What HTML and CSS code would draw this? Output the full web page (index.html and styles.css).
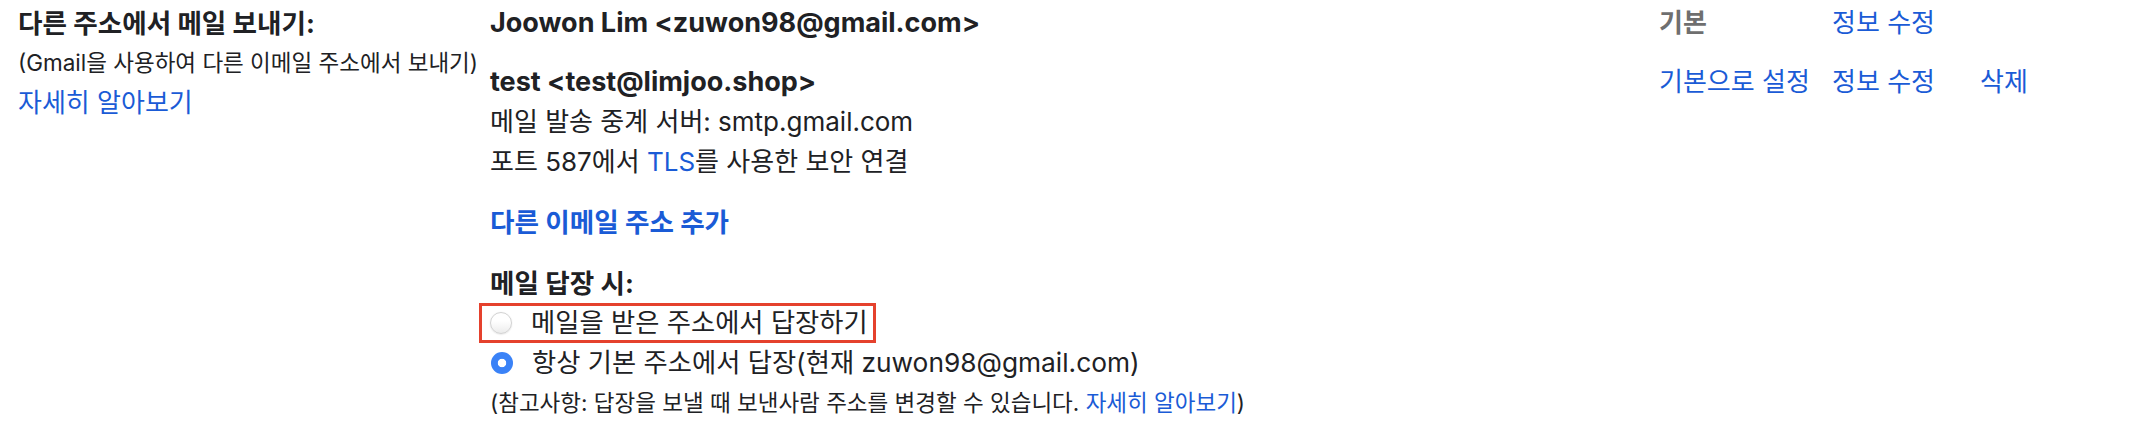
FILE: index.html
```html
<!DOCTYPE html>
<html lang="ko">
<head>
<meta charset="utf-8">
<link rel="stylesheet" href="styles.css">
</head>
<body>
<div class="page">
  <div class="label-col">
    <div class="heading">다른 주소에서 메일 보내기:</div>
    <div class="note">(Gmail을 사용하여 다른 이메일 주소에서 보내기)</div>
    <a class="link">자세히 알아보기</a>
  </div>
  <div class="main-col">
    <div class="addr-row first">
      <div class="addr">
        <div class="name">Joowon Lim &lt;zuwon98@gmail.com&gt;</div>
      </div>
      <div class="act default">기본</div>
      <div class="act"><a class="link">정보 수정</a></div>
      <div class="act"></div>
    </div>
    <div class="addr-row">
      <div class="addr">
        <div class="name">test &lt;test@limjoo.shop&gt;</div>
        <div class="line">메일 발송 중계 서버: smtp.gmail.com</div>
        <div class="line">포트 587에서 <a class="link">TLS</a>를 사용한 보안 연결</div>
      </div>
      <div class="act"><a class="link">기본으로 설정</a></div>
      <div class="act"><a class="link">정보 수정</a></div>
      <div class="act"><a class="link">삭제</a></div>
    </div>
    <div class="add-row"><a class="link strong">다른 이메일 주소 추가</a></div>
    <div class="reply">
      <div class="heading">메일 답장 시:</div>
      <div class="option-wrap">
        <label class="option highlighted"><span class="radio"></span><span>메일을 받은 주소에서 답장하기</span></label>
      </div>
      <div class="option-wrap">
        <label class="option"><span class="radio checked"></span><span>항상 기본 주소에서 답장(현재 zuwon98@gmail.com)</span></label>
      </div>
      <div class="note">(참고사항: 답장을 보낼 때 보낸사람 주소를 변경할 수 있습니다. <a class="link">자세히 알아보기</a>)</div>
    </div>
  </div>
</div>
</body>
</html>
```

FILE: styles.css
```css
html, body {
  margin: 0;
  padding: 0;
  background: #ffffff;
}

body {
  font-family: Inter, "Noto Sans CJK KR", sans-serif;
  color: #202124;
  font-size: 26px;
  line-height: 40px;
}

.page {
  display: flex;
  padding: 3px 0 0 18px;
}

.label-col {
  width: 472px;
  flex: none;
  display: flex;
  flex-direction: column;
}

.heading {
  font-weight: 700;
  font-size: 26.6px;
}

.note {
  font-size: 22.5px;
  white-space: nowrap;
}

.link {
  color: #1a5bd6;
  text-decoration: none;
  cursor: pointer;
}

.link.strong {
  font-weight: 700;
  font-size: 26.6px;
}

.main-col {
  flex: 1;
  display: flex;
  flex-direction: column;
}

.addr-row {
  display: grid;
  grid-template-columns: 1169px 173px 148px 1fr;
  padding-top: 19px;
}

.addr-row.first {
  padding-top: 0;
}

.name {
  font-weight: 700;
  font-size: 27px;
}

.act {
  white-space: nowrap;
}

.act.default {
  color: #6f6f6f;
  font-weight: 700;
}

.add-row {
  padding-top: 20px;
}

.reply {
  padding-top: 20px;
  display: flex;
  flex-direction: column;
}

.option-wrap {
  display: flex;
}

.option {
  display: inline-flex;
  align-items: center;
  height: 40px;
  padding-left: 1px;
  font-size: 26.3px;
}

.option.highlighted {
  box-sizing: border-box;
  height: 40px;
  margin-left: -11px;
  padding: 0 5px 0 8px;
  border: 3px solid #e5412d;
}

.radio {
  width: 22px;
  height: 22px;
  box-sizing: border-box;
  border-radius: 50%;
  margin-right: 19px;
  border: 1px solid #d2d2d2;
  background: linear-gradient(#ffffff 40%, #ececec);
  box-shadow: 0 0.5px 1.5px rgba(0,0,0,0.12);
  flex: none;
}

.radio.checked {
  border: none;
  background: radial-gradient(circle, #ffffff 0 3.8px, #3a82f7 4.6px);
  box-shadow: none;
}
```
